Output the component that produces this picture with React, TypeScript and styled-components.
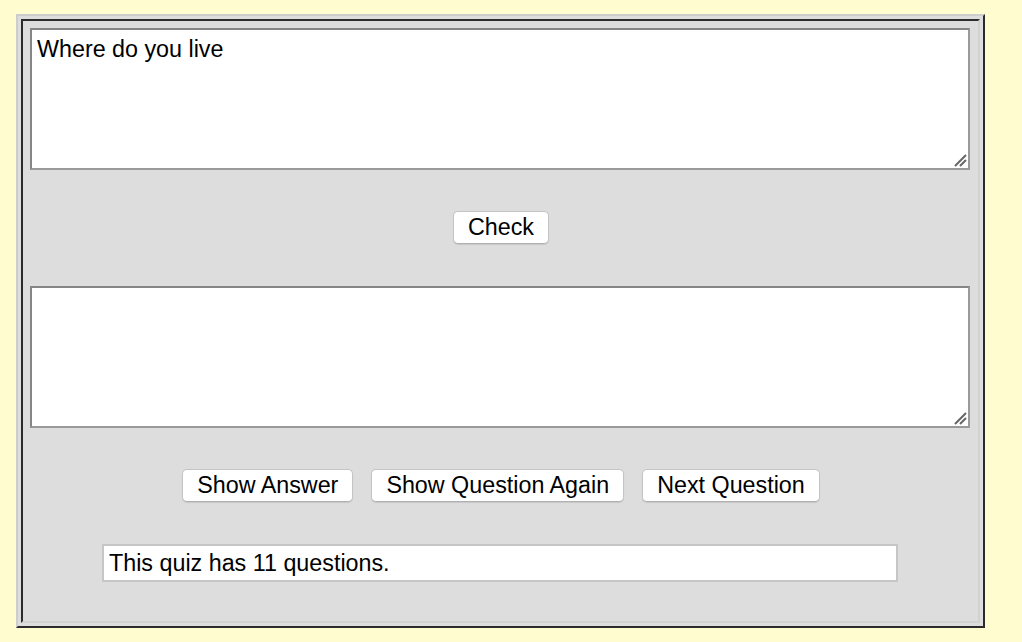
import React from "react";
import styled, { createGlobalStyle } from "styled-components";

const GlobalStyle = createGlobalStyle`
  html, body {
    margin: 0;
    background: #fffdd0;
  }
  body {
    padding: 14px 16px;
    font-family: "Liberation Sans", Arial, sans-serif;
  }
`;

const QuizTable = styled.div`
  width: 969px;
  height: 614px;
  box-sizing: border-box;
  background: #dddddd;
  border: 2px solid;
  border-color: #cdcdcd #2b2b2b #2b2b2b #cdcdcd;
  padding: 3px;
`;

const Cell = styled.div`
  height: 100%;
  box-sizing: border-box;
  border: 2px solid;
  border-color: #2b2b2b #d2d2d2 #d2d2d2 #2b2b2b;
  padding: 5px 6px 0 7px;
  display: flex;
  flex-direction: column;
  align-items: flex-start;
`;

const BoxWrap = styled.div<{ $gap: number }>`
  position: relative;
  margin-top: ${(p) => p.$gap}px;
  width: 940px;
  height: 142px;
`;

const Box = styled.textarea`
  display: block;
  width: 100%;
  height: 100%;
  box-sizing: border-box;
  margin: 0;
  border: 2px solid;
  border-color: #858585 #9a9a9a #9a9a9a #858585;
  background: #fff;
  padding: 6px 5px 3px;
  font-family: "Liberation Sans", Arial, sans-serif;
  font-size: 23.3px;
  color: #000;
  resize: none;
  outline: none;
`;

const Grip = styled.svg`
  position: absolute;
  right: 3px;
  bottom: 3px;
  width: 14px;
  height: 14px;
  pointer-events: none;
`;

const ButtonRow = styled.div<{ $gap: number }>`
  align-self: stretch;
  display: flex;
  justify-content: center;
  gap: 18px;
  margin-top: ${(p) => p.$gap}px;
`;

const Btn = styled.button`
  height: 33px;
  box-sizing: border-box;
  margin: 0;
  padding: 1px 14px 0;
  background: #fff;
  border: 1px solid #c4c4c4;
  border-bottom-color: #b0b0b0;
  border-radius: 5px;
  box-shadow: 0 1px 1px rgba(0, 0, 0, 0.1);
  font-family: "Liberation Sans", Arial, sans-serif;
  font-size: 23.3px;
  color: #000;
  line-height: 1;
`;

const StatusRow = styled.div`
  align-self: stretch;
  display: flex;
  margin-top: 42px;
  padding-left: 72px;
`;

const Status = styled.input`
  width: 796px;
  height: 38px;
  box-sizing: border-box;
  margin: 0;
  border: 2px solid #c6c6c6;
  background: #fff;
  padding: 0 5px;
  font-family: "Liberation Sans", Arial, sans-serif;
  font-size: 23.3px;
  color: #000;
  outline: none;
`;

const Answer = ({ gap, value }: { gap: number; value: string }) => (
  <BoxWrap $gap={gap}>
    <Box defaultValue={value} />
    <Grip viewBox="0 0 14 14">
      <path d="M2 13 L13 2 M7 13 L13 7" stroke="#666" strokeWidth="2" />
    </Grip>
  </BoxWrap>
);

export default function App() {
  return (
    <>
      <GlobalStyle />
      <QuizTable>
        <Cell>
          <Answer gap={2} value="Where do you live" />
          <ButtonRow $gap={41}>
            <Btn>Check</Btn>
          </ButtonRow>
          <Answer gap={42} value="" />
          <ButtonRow $gap={41}>
            <Btn>Show Answer</Btn>
            <Btn>Show Question Again</Btn>
            <Btn>Next Question</Btn>
          </ButtonRow>
          <StatusRow>
            <Status readOnly defaultValue="This quiz has 11 questions." />
          </StatusRow>
        </Cell>
      </QuizTable>
    </>
  );
}
